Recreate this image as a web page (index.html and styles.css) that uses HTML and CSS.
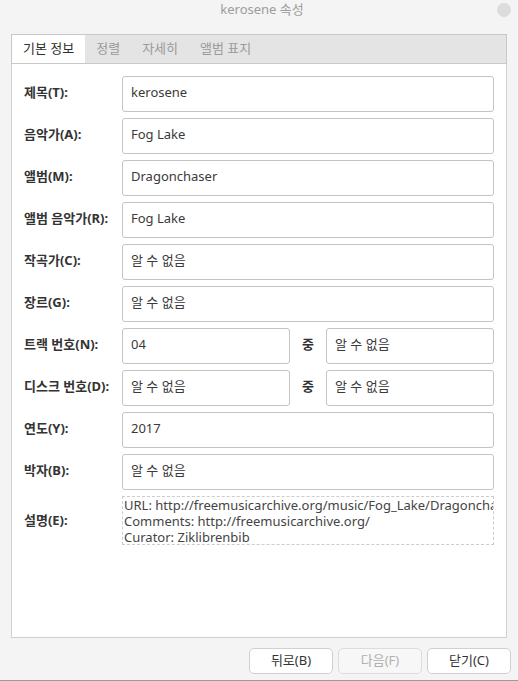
FILE: index.html
```html
<!DOCTYPE html>
<html lang="ko">
<head>
<meta charset="utf-8">
<title>kerosene 속성</title>
<link rel="stylesheet" href="styles.css">
</head>
<body>
<div class="window">
  <header class="titlebar">
    <span class="title">kerosene 속성</span>
    <span class="close"></span>
  </header>
  <div class="notebook">
    <nav class="tabs">
      <span class="tab active">기본 정보</span>
      <span class="tab">정렬</span>
      <span class="tab">자세히</span>
      <span class="tab">앨범 표지</span>
    </nav>
    <section class="page">
      <label class="label">제목(T):</label>
      <div class="entry">kerosene</div>
      <label class="label">음악가(A):</label>
      <div class="entry">Fog Lake</div>
      <label class="label">앨범(M):</label>
      <div class="entry">Dragonchaser</div>
      <label class="label">앨범 음악가(R):</label>
      <div class="entry">Fog Lake</div>
      <label class="label">작곡가(C):</label>
      <div class="entry">알 수 없음</div>
      <label class="label">장르(G):</label>
      <div class="entry">알 수 없음</div>
      <label class="label">트랙 번호(N):</label>
      <div class="pair">
        <div class="entry">04</div>
        <span class="of">중</span>
        <div class="entry">알 수 없음</div>
      </div>
      <label class="label">디스크 번호(D):</label>
      <div class="pair">
        <div class="entry">알 수 없음</div>
        <span class="of">중</span>
        <div class="entry">알 수 없음</div>
      </div>
      <label class="label">연도(Y):</label>
      <div class="entry">2017</div>
      <label class="label">박자(B):</label>
      <div class="entry">알 수 없음</div>
      <label class="label label-top">설명(E):</label>
      <div class="comment">URL: http://freemusicarchive.org/music/Fog_Lake/Dragonchaser/
Comments: http://freemusicarchive.org/
Curator: Ziklibrenbib</div>
    </section>
  </div>
  <footer class="buttons">
    <button class="btn">뒤로(B)</button>
    <button class="btn" disabled>다음(F)</button>
    <button class="btn">닫기(C)</button>
  </footer>
</div>
</body>
</html>
```
FILE: styles.css
```css
* { box-sizing: border-box; }
html, body { margin: 0; padding: 0; }
body {
  background: #f4f4f4;
  font-family: "Noto Sans", "Noto Sans CJK KR", sans-serif;
  font-size: 13px;
  color: #333;
}
.window {
  height: 681px;
  display: flex;
  flex-direction: column;
  border-bottom: 1px solid #9a9a9a;
}
.titlebar {
  position: relative;
  height: 34px;
  flex: none;
  text-align: center;
  padding-left: 6px;
}
.title {
  display: inline-block;
  line-height: 18px;
  color: #9c9c9c;
  font-size: 13px;
}
.close {
  position: absolute;
  right: 7px;
  top: 3px;
  width: 14px;
  height: 14px;
  border-radius: 50%;
  background: #dcdcdc;
}
.notebook {
  margin: 0 11px;
  height: 604px;
  flex: none;
  display: flex;
  flex-direction: column;
}
.tabs {
  display: flex;
  height: 30px;
  flex: none;
  background: #e4e4e4;
  border: 1px solid #c8c8c8;
}
.tab {
  padding: 0 11px;
  line-height: 27px;
  color: #9a9a9a;
  font-size: 13px;
}
.tab.active {
  background: #fff;
  color: #2e2e2e;
}
.page {
  flex: 1;
  background: #fff;
  border: 1px solid #d0d0d0;
  border-top: none;
  padding: 12px 12px 0 12px;
  display: grid;
  grid-template-columns: 98px 1fr;
  grid-auto-rows: 36px;
  row-gap: 6px;
  align-content: start;
  align-items: center;
}
.label {
  font-weight: bold;
  color: #333;
  font-size: 13px;
  padding-bottom: 5px;
}
.label-top {
  align-self: start;
  padding-bottom: 0;
  margin-top: 14px;
}
.entry {
  height: 36px;
  border: 1px solid #c4c4c4;
  border-radius: 3px;
  padding: 0 8px;
  line-height: 30px;
  color: #3a3a3a;
  font-size: 13px;
  white-space: nowrap;
  overflow: hidden;
}
.pair {
  display: flex;
  align-items: center;
  gap: 12px;
}
.pair .entry { flex: 1; }
.of {
  font-weight: bold;
  width: 12px;
  color: #333;
  padding-bottom: 5px;
}
.comment {
  height: 49px;
  align-self: start;
  border: 1px dashed #cccccc;
  padding: 0 0 0 1px;
  font-size: 13px;
  line-height: 16px;
  color: #444;
  white-space: pre;
  overflow: hidden;
}
.buttons {
  flex: 1;
  display: flex;
  justify-content: flex-end;
  align-items: flex-start;
  gap: 5px;
  padding: 10px 7px 0 0;
}
.btn {
  width: 84px;
  height: 26px;
  background: #fff;
  border: 1px solid #d0d0d0;
  border-radius: 5px;
  font-family: "Noto Sans", "Noto Sans CJK KR", sans-serif;
  font-size: 13px;
  line-height: 22px;
  color: #333;
  padding: 0 0 2px 0;
}
.btn:disabled {
  background: #f7f7f7;
  color: #b0b0b0;
  border-color: #dcdcdc;
}
```
